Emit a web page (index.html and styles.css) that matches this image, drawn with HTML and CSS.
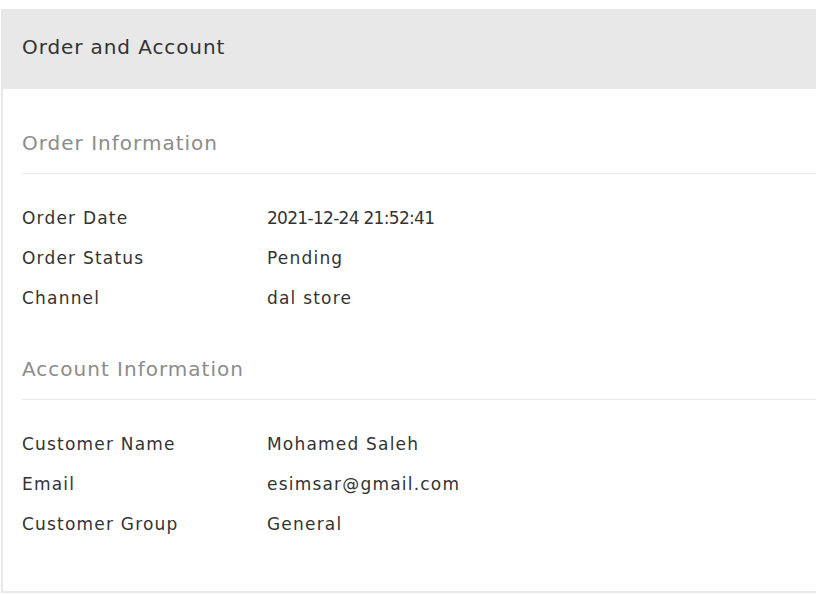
FILE: index.html
```html
<!DOCTYPE html>
<html lang="en">
<head>
  <meta charset="UTF-8">
  <meta name="viewport" content="width=device-width, initial-scale=1.0">
  <title>Order and Account</title>
  <link rel="stylesheet" href="styles.css">
</head>
<body>
  <div class="card">
    <div class="card-header">Order and Account</div>

    <div class="card-body">
      <!-- Order info -->
      <div class="section">
        <h3 class="section-title">Order Information</h3>
        <div class="info-list">
          <div class="info-row"><span class="label">Order Date</span><span class="value date">2021-12-24 21:52:41</span></div>
          <div class="info-row"><span class="label">Order Status</span><span class="value">Pending</span></div>
          <div class="info-row"><span class="label">Channel</span><span class="value">dal store</span></div>
        </div>
      </div>

      <!-- Account info -->
      <div class="section">
        <h3 class="section-title">Account Information</h3>
        <div class="info-list">
          <div class="info-row"><span class="label">Customer Name</span><span class="value">Mohamed Saleh</span></div>
          <div class="info-row"><span class="label">Email</span><span class="value">esimsar@gmail.com</span></div>
          <div class="info-row"><span class="label">Customer Group</span><span class="value">General</span></div>
        </div>
      </div>
    </div>
  </div>
</body>
</html>
```

FILE: styles.css
```css
body {
  margin: 0;
  overflow: hidden;
  font-family: "DejaVu Sans", sans-serif;
  color: #333;
  background: #fff;
}
.card {
  margin: 9px 0 0 1px;
  width: calc(100vw + 40px);
  border: 2px solid #e8e8e8;
  border-top: 0;
}
.card-header {
  background: #e8e8e8;
  height: 80px;
  box-sizing: border-box;
  display: flex;
  align-items: center;
  padding: 0 0 4px 19px;
  font-size: 20px;
  letter-spacing: 0.9px;
  color: #333;
}
.card-body {
  padding: 40px 0 47px 19px;
}
.section-title {
  margin: 0;
  font-size: 20px;
  font-weight: normal;
  letter-spacing: 1px;
  color: #8c8c8c;
  line-height: 28px;
  padding-bottom: 16px;
  border-bottom: 1px solid #e9e9e9;
}
.info-list {
  padding: 24px 0 37px;
}
.section:last-child .info-list {
  padding-bottom: 0;
}
.info-row {
  display: grid;
  grid-template-columns: 245px 1fr;
  height: 40px;
  align-items: center;
  font-size: 17px;
  letter-spacing: 1.2px;
}
/* digits run wide in this font */
.value.date {
  letter-spacing: -0.7px;
}
```
